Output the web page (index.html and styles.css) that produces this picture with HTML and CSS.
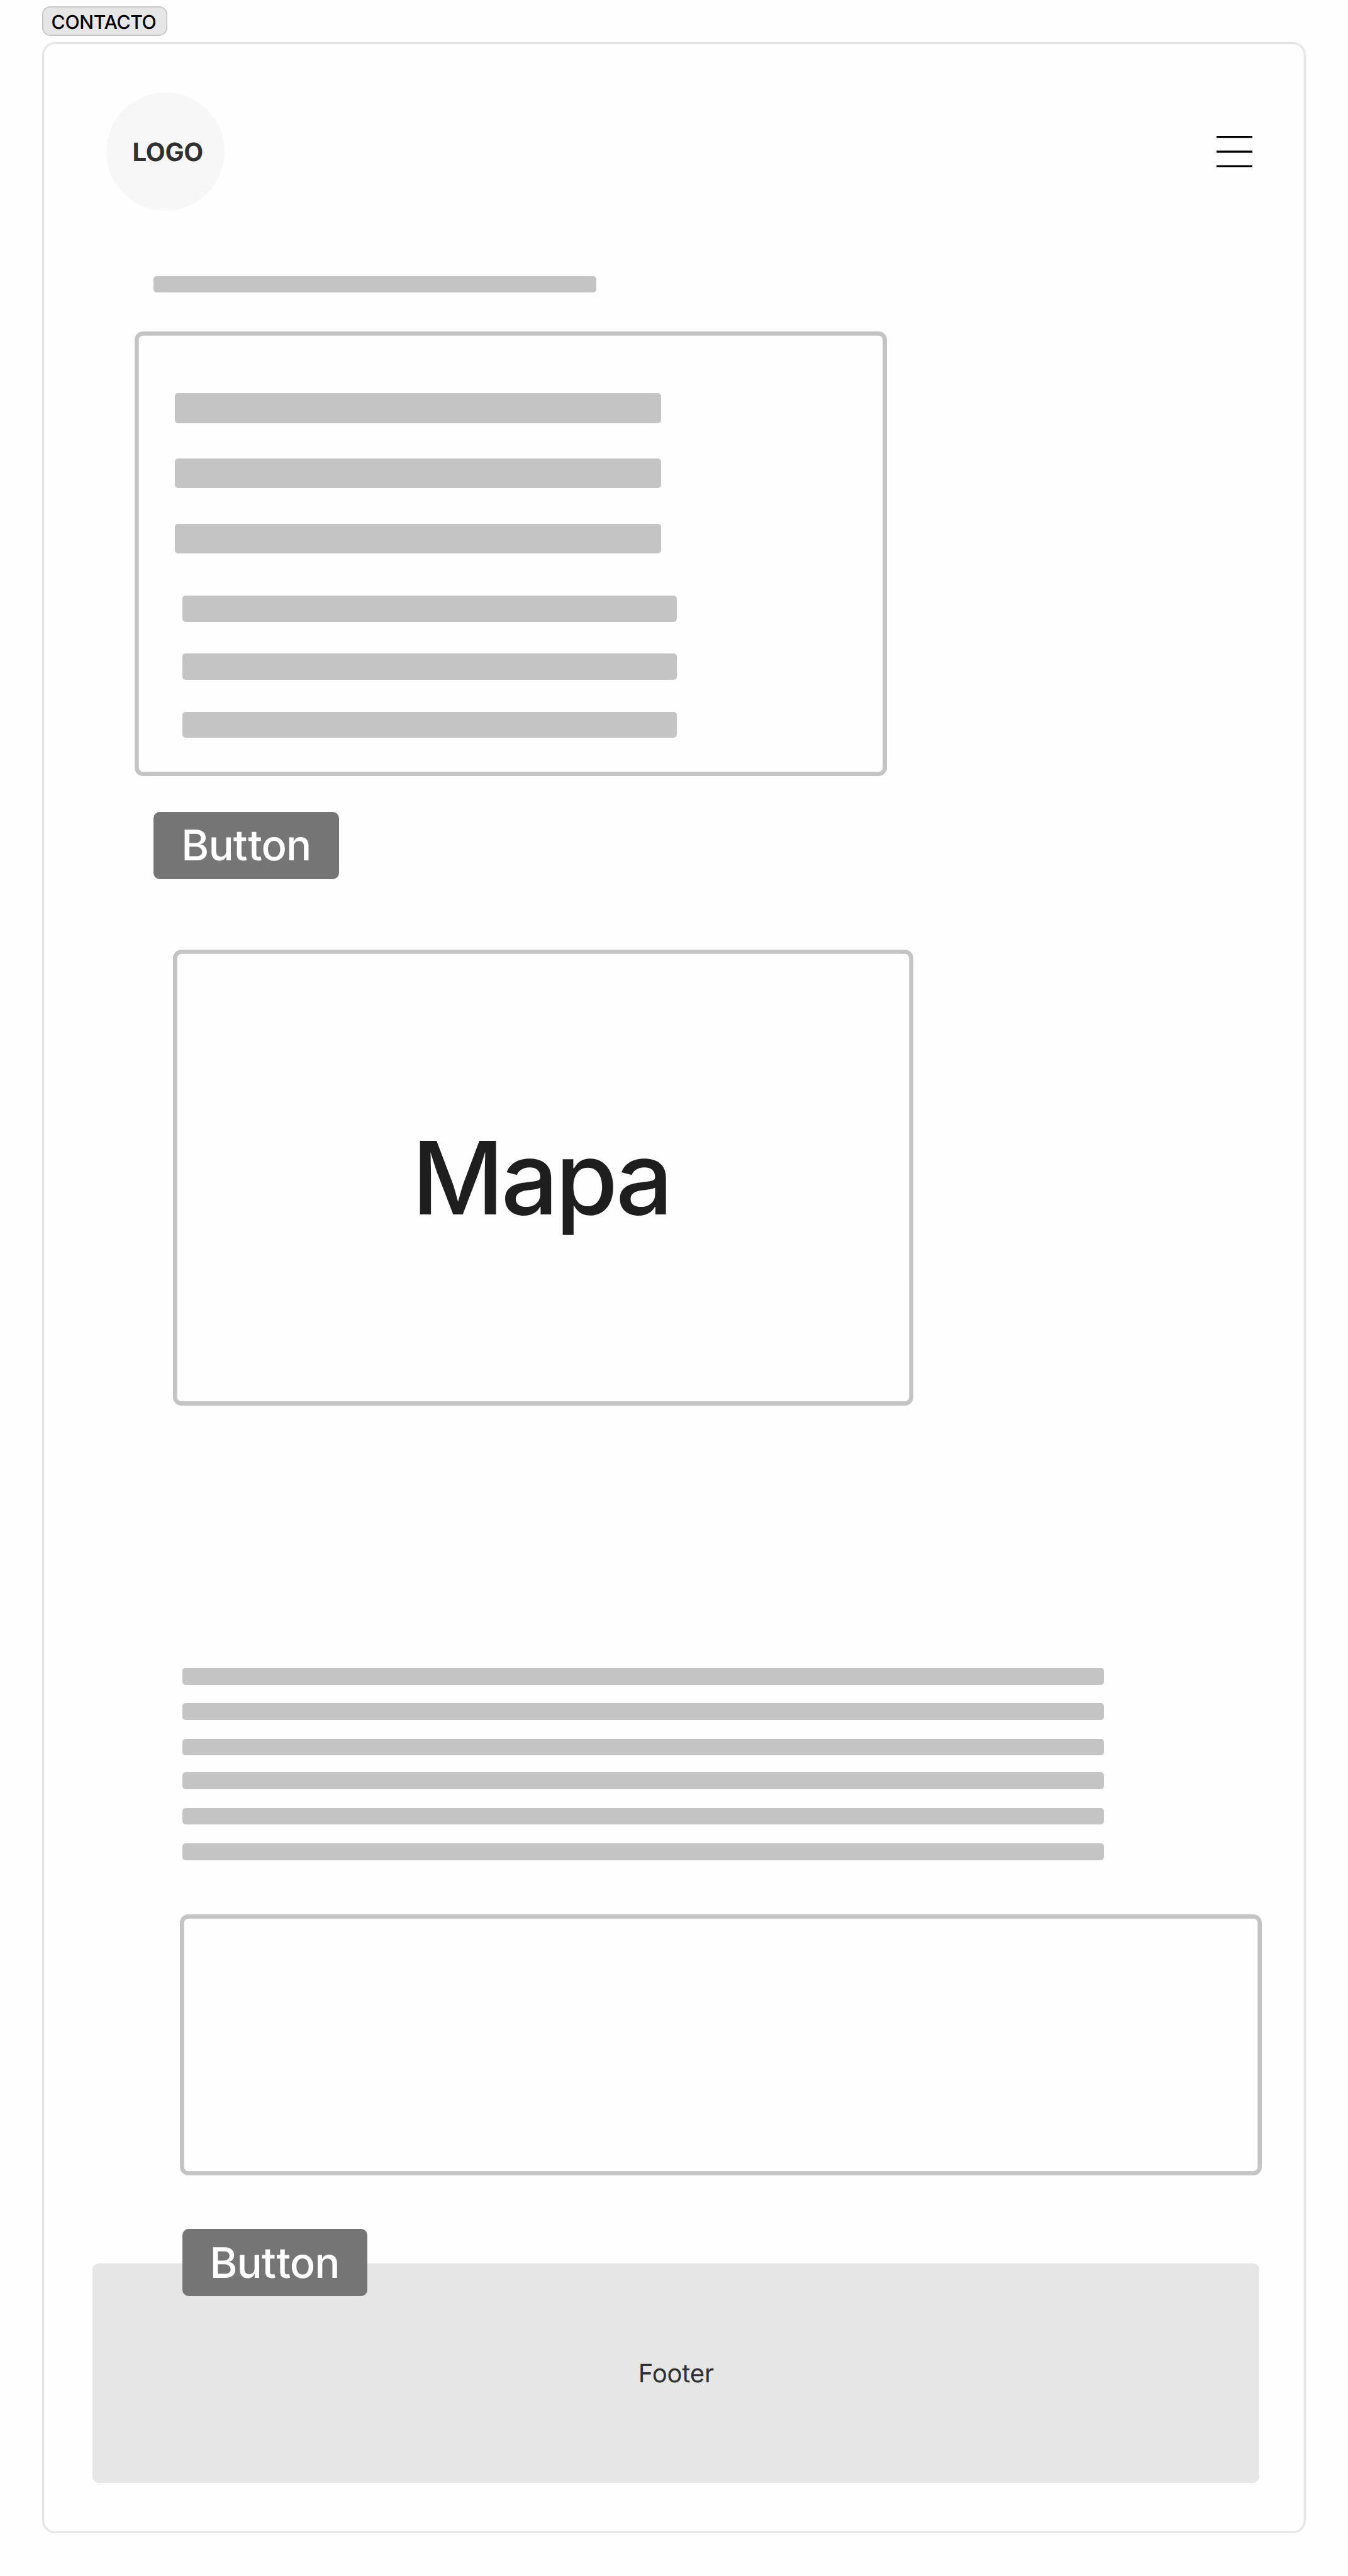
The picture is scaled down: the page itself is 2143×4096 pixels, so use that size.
FILE: index.html
```html
<!DOCTYPE html>
<html lang="es">
<head>
<meta charset="utf-8">
<title>Contacto</title>
<link rel="stylesheet" href="styles.css">
</head>
<body>
<div class="label">CONTACTO</div>
<main class="frame">
  <header class="header">
    <div class="logo">LOGO</div>
    <svg class="menu" viewBox="0 0 68 60" aria-label="Menu"><path d="M0 2H68M0 30H68M0 58H68" stroke="#000" stroke-width="4"/></svg>
  </header>
  <div class="bar bar-title"></div>
  <section class="box form">
    <div class="fields">
      <div class="bar"></div>
      <div class="bar"></div>
      <div class="bar"></div>
    </div>
    <div class="details">
      <div class="bar"></div>
      <div class="bar"></div>
      <div class="bar"></div>
    </div>
  </section>
  <div class="button button-send"><span>Bu<span class="loose">t</span>ton</span></div>
  <section class="box map">Mapa</section>
  <div class="lines">
    <div class="bar"></div>
    <div class="bar"></div>
    <div class="bar"></div>
  </div>
  <div class="lines lines-next">
    <div class="bar"></div>
    <div class="bar"></div>
    <div class="bar"></div>
  </div>
  <section class="box message"></section>
  <div class="button button-message"><span>Bu<span class="loose">t</span>ton</span></div>
  <footer class="footer">Footer</footer>
</main>
</body>
</html>
```
FILE: styles.css
```css
/* 1rem = 100 design units */
html {
  font-size: 83.7109px;
}

body {
  margin: 0;
  padding: 0.12rem 0.8rem 0;
  height: 4096px;
  box-sizing: border-box;
  overflow: hidden;
  background: #fefefe;
  font-family: Inter, "Liberation Sans", sans-serif;
  text-rendering: geometricPrecision;
}

.label {
  display: flex;
  align-items: center;
  box-sizing: border-box;
  width: 2.38rem;
  height: 0.56rem;
  padding: 0.065rem 0 0 0.175rem;
  border-radius: 0.16rem;
  background: #e6e6e6;
  box-shadow: inset 0 0 0 0.02rem #c4c4c4;
  color: #000;
  font-size: 0.36rem;
  font-weight: 500;
  letter-spacing: -0.01em;
  line-height: 1;
}

.frame {
  display: flex;
  flex-direction: column;
  align-items: flex-start;
  box-sizing: border-box;
  width: 24rem;
  height: 47.32rem;
  margin-top: 0.12rem;
  padding-top: 0.96rem;
  border-radius: 0.24rem;
  box-shadow: inset 0 0 0 0.04rem #e6e6e6;
}

.frame > * {
  flex: none;
  box-sizing: border-box;
}

.header {
  display: flex;
  align-items: center;
  justify-content: space-between;
  width: 100%;
  padding: 0 1.02rem 0 1.22rem;
}

.logo {
  display: flex;
  align-items: center;
  box-sizing: border-box;
  width: 2.24rem;
  height: 2.24rem;
  padding: 0.02rem 0 0 0.495rem;
  border-radius: 50%;
  background: #f7f7f7;
  color: #303030;
  font-size: 0.48rem;
  font-weight: 700;
  letter-spacing: -0.007em;
  line-height: 1;
}

.menu {
  width: 0.68rem;
  height: 0.6rem;
}

.bar {
  border-radius: 0.06rem;
  background: #c4c4c4;
}

.bar-title {
  width: 8.4rem;
  height: 0.32rem;
  margin: 1.24rem 0 0 2.12rem;
}

.box {
  border-radius: 0.16rem;
  box-shadow: inset 0 0 0 0.08rem #c4c4c4;
}

.form {
  display: flex;
  flex-direction: column;
  width: 14.28rem;
  height: 8.44rem;
  margin: 0.74rem 0 0 1.76rem;
  padding: 1.17rem 0 0 0.763rem;
}

.fields {
  display: flex;
  flex-direction: column;
  gap: 0.677rem;
}

.fields .bar {
  width: 9.235rem;
  height: 0.565rem;
}

.details {
  display: flex;
  flex-direction: column;
  gap: 0.6rem;
  margin: 0.8rem 0 0 0.137rem;
}

.details .bar {
  width: 9.4rem;
  height: 0.5rem;
}

.button {
  display: flex;
  align-items: center;
  width: 3.52rem;
  height: 1.28rem;
  padding: 0.03rem 0 0 0.525rem;
  border-radius: 0.12rem;
  background: #757575;
  color: #fff;
  font-size: 0.8rem;
  font-weight: 500;
  letter-spacing: -0.014em;
  line-height: 1;
}

/* keeps the crossbars of the double t apart */
.loose {
  letter-spacing: 0.012em;
}

.button-send {
  margin: 0.68rem 0 0 2.12rem;
}

.map {
  display: flex;
  align-items: center;
  justify-content: center;
  width: 14.06rem;
  height: 8.66rem;
  margin: 1.34rem 0 0 2.48rem;
  padding: 0.03rem 0.07rem 0 0;
  color: #1e1e1e;
  font-size: 1.92rem;
  font-weight: 500;
  letter-spacing: -0.03em;
  line-height: 1;
}

.lines {
  display: flex;
  flex-direction: column;
  gap: 0.353rem;
  width: 17.5rem;
  margin: 4.98rem 0 0 2.66rem;
}

.lines .bar {
  height: 0.32rem;
}

.lines-next {
  margin-top: 0.323rem;
}

.message {
  width: 20.54rem;
  height: 4.96rem;
  margin: 1.026rem 0 0 2.62rem;
}

.button-message {
  position: relative;
  z-index: 1;
  margin: 1.02rem 0 0 2.66rem;
}

.footer {
  display: flex;
  align-items: center;
  justify-content: center;
  width: 22.16rem;
  height: 4.16rem;
  margin: -0.62rem 0 0 0.96rem;
  padding-top: 0.02rem;
  border-radius: 0.12rem;
  background: #e6e6e6;
  color: #303030;
  font-size: 0.48rem;
  font-weight: 400;
  letter-spacing: -0.006em;
  line-height: 1;
}
```
